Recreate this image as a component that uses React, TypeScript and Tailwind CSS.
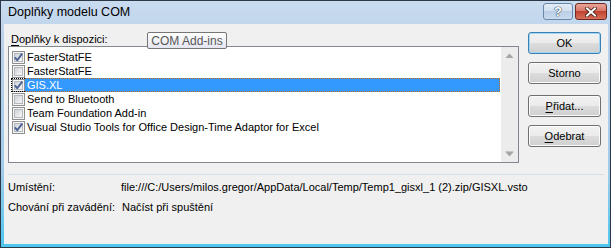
import React from "react"

const items = [
  { name: "FasterStatFE", checked: true },
  { name: "FasterStatFE", checked: false },
  { name: "GIS.XL", checked: true },
  { name: "Send to Bluetooth", checked: false },
  { name: "Team Foundation Add-in", checked: false },
  { name: "Visual Studio Tools for Office Design-Time Adaptor for Excel", checked: true },
]

const selected = 2

const CheckBox = ({ checked }: { checked: boolean }) => (
  <svg width="13" height="13" viewBox="0 0 13 13" className="block">
    <defs>
      <linearGradient id="cbFill" x1="0" y1="0" x2="1" y2="1">
        <stop offset="0" stopColor="#cdd1d6" />
        <stop offset="1" stopColor="#f8f8f8" />
      </linearGradient>
    </defs>
    <rect x="0.5" y="0.5" width="12" height="12" fill="#f5f5f5" stroke="#8e8f8f" />
    <rect x="2.5" y="2.5" width="8" height="8" fill="url(#cbFill)" stroke="#b3b8bd" />
    {checked && (
      <path d="M2.8 6.4 L5.2 9.2 L10.2 2.6" fill="none" stroke="#4b5f95" strokeWidth="1.9" strokeLinejoin="round" />
    )}
  </svg>
)

const Arrow = ({ up }: { up: boolean }) => (
  <div className="h-[17px] flex items-center justify-center">
    <svg width="9" height="6" viewBox="0 0 9 6">
      {up ? (
        <polygon points="4.5,0.5 8.5,5 0.5,5" fill="#a6a6a6" />
      ) : (
        <>
          <rect x="0.5" y="0" width="8" height="1" fill="#c4c4c4" />
          <polygon points="0.5,1 8.5,1 4.5,5.5" fill="#a6a6a6" />
        </>
      )}
    </svg>
  </div>
)

const Button = ({ children, primary }: { children: React.ReactNode; primary?: boolean }) => (
  <div
    className={`h-[22px] w-[73px] flex items-center justify-center rounded-[3px] border bg-[linear-gradient(#f2f2f2_0%,#ebebeb_50%,#dddddd_50%,#cfcfcf_100%)] ${
      primary ? "border-[#3c7fb1] shadow-[inset_0_0_0_1px_#9fd5f5]" : "border-[#707070] shadow-[inset_0_0_0_1px_#fbfbfb]"
    }`}
  >
    {children}
  </div>
)

export default function App() {
  return (
    <div className="w-[611px] h-[248px] flex flex-col border border-[#2c3848] bg-[linear-gradient(#c9dbef_0%,#b9d0ea_20%,#9fcbea_70%,#4cc6ee_100%)] font-['Liberation_Sans',Arial,sans-serif] text-[11px] text-black overflow-hidden">
      {/* title bar */}
      <div className="h-[23px] shrink-0 flex items-start pl-[7px] pr-[3px]">
        <span className="flex-1 leading-[23px] text-[12.5px]">Doplňky modelu COM</span>
        <div className="mt-[2px] h-[17px] w-[30px] rounded-[3px] border border-[#6a87ab] bg-[linear-gradient(#e3ecf7_0%,#d3e0ef_45%,#bccee5_50%,#c9dbef_100%)] flex items-center justify-center">
          <span className="font-bold text-[13px] leading-none text-white [text-shadow:0_0_1px_#33465f,0_0_1px_#33465f,0_0_1px_#33465f]">?</span>
        </div>
        <div className="mt-[2px] ml-[2px] h-[17px] w-[32px] rounded-[3px] border border-[#6e2a20] bg-[linear-gradient(#e8a597_0%,#d8786a_45%,#c2422f_50%,#d5705a_100%)] flex items-center justify-center">
          <svg width="12" height="10" viewBox="0 0 12 10">
            <path d="M2 1.5 L10 8.5 M10 1.5 L2 8.5" stroke="#3b1b16" strokeWidth="3.6" strokeLinecap="square" />
            <path d="M2 1.5 L10 8.5 M10 1.5 L2 8.5" stroke="#ffffff" strokeWidth="2" strokeLinecap="square" />
          </svg>
        </div>
      </div>

      {/* client area */}
      <div className="flex-1 ml-[3px] mr-[2px] mb-[3px] bg-[#f0f0f0] relative flex flex-col">
        <div className="flex pt-[8px]">
          <div className="ml-[4px] w-[511px] flex flex-col">
            <div className="h-[14px] leading-[14px] pl-[3px]">
              <span className="underline underline-offset-2">D</span>oplňky k dispozici:
            </div>
            <div className="h-[117px] border border-[#828790] bg-white flex">
              <div className="flex-1 pt-[3px] pl-[2px] pr-[1px] flex flex-col">
                {items.map((it, i) => (
                  <div key={i} className="h-[14px] flex">
                    <div className="relative w-[14px] pl-[1px] flex items-center">
                      <CheckBox checked={it.checked} />
                      {i === selected && (
                        <div className="absolute inset-0 border-y border-l border-dotted border-black" />
                      )}
                    </div>
                    <div className={`relative flex-1 pl-[2px] leading-[14px] whitespace-nowrap ${i === selected ? "bg-[#3399ff] text-white" : ""}`}>
                      {it.name}
                      {i === selected && (
                        <div className="absolute inset-0 border-y border-r border-dotted border-[#cc6a10]" />
                      )}
                    </div>
                  </div>
                ))}
              </div>
              <div className="w-[17px] bg-[#ececec] flex flex-col justify-between">
                <Arrow up />
                <Arrow up={false} />
              </div>
            </div>
          </div>

          <div className="ml-[9px] flex flex-col">
            <Button primary>OK</Button>
            <div className="mt-[8px]">
              <Button>Storno</Button>
            </div>
            <div className="mt-[11px]">
              <Button>
                <span className="underline underline-offset-2">P</span>řidat...
              </Button>
            </div>
            <div className="mt-[8px]">
              <Button>
                <span className="underline underline-offset-2">O</span>debrat
              </Button>
            </div>
          </div>
        </div>

        <div className="mt-[11px] mx-[4px] h-[1px] bg-[#d5dfe5]" />

        <div className="ml-[4px] mt-[5px] grid grid-cols-[113px_1fr] gap-y-[6px] leading-[14px] whitespace-nowrap">
          <span>Umístění:</span>
          <span>file:///C:/Users/milos.gregor/AppData/Local/Temp/Temp1_gisxl_1 (2).zip/GISXL.vsto</span>
          <span>Chování při zavádění:</span>
          <span className="pl-[1px]">Načíst při spuštění</span>
        </div>

        {/* tooltip */}
        <div className="absolute left-[143px] top-[8px] h-[17px] w-[80px] rounded-[2px] border border-[#767676] bg-[linear-gradient(#ffffff,#e4e5f0)] flex items-center justify-center text-[12px] text-[#575757] leading-none">
          COM Add-ins
        </div>
      </div>
    </div>
  )
}
